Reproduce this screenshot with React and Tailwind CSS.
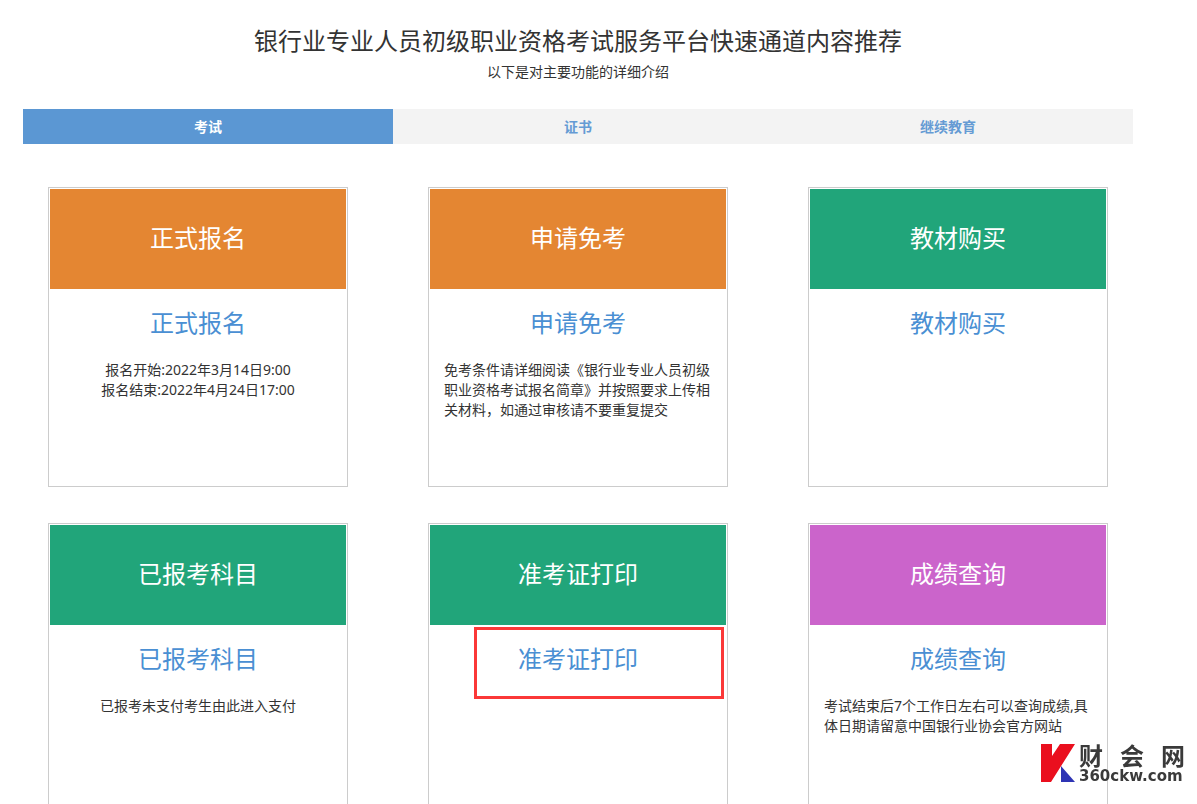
import { useState } from "react";
import clsx from "clsx";

const tabs = ["考试", "证书", "继续教育"];

const cards = [
  {
    title: "正式报名",
    color: "bg-[#e48632]",
    lines: ["报名开始:2022年3月14日9:00", "报名结束:2022年4月24日17:00"],
  },
  {
    title: "申请免考",
    color: "bg-[#e48632]",
    lines: ["免考条件请详细阅读《银行业专业人员初级职业资格考试报名简章》并按照要求上传相关材料，如通过审核请不要重复提交"],
    alignLeft: true,
  },
  { title: "教材购买", color: "bg-[#21a57a]", lines: [] },
  { title: "已报考科目", color: "bg-[#21a57a]", lines: ["已报考未支付考生由此进入支付"] },
  { title: "准考证打印", color: "bg-[#21a57a]", lines: [], highlighted: true },
  {
    title: "成绩查询",
    color: "bg-[#cb64cb]",
    lines: ["考试结束后7个工作日左右可以查询成绩,具体日期请留意中国银行业协会官方网站"],
    alignLeft: true,
  },
];

function Card({ title, color, lines, alignLeft, highlighted }) {
  return (
    <article className="relative min-h-[300px] border border-[#cccccc] p-px">
      <a href="#" className={clsx("flex h-[100px] items-center justify-center pb-0.5 text-2xl text-white", color)}>
        {title}
      </a>
      <h2 className="mt-4 text-center text-2xl leading-9 text-[#4a8fd3]">
        <a href="#">{title}</a>
      </h2>
      <div className={clsx("mt-[19px] px-3.5 leading-5", alignLeft ? "text-left" : "text-center")}>
        {lines.map((line) => (
          <p key={line}>{line}</p>
        ))}
      </div>
      {highlighted && (
        <div className="pointer-events-none absolute top-[103px] right-[3px] h-[72px] w-[250px] border-3 border-[#fb3838]" />
      )}
    </article>
  );
}

function SiteLogo() {
  return (
    <a href="#" className="fixed right-3 bottom-5 flex items-center gap-1 text-[#3a3a3a]">
      <svg width="35" height="40" viewBox="0 0 35 40" aria-hidden="true">
        <path d="M1 0H12V12L20 0H35L11 38H1Z" fill="#ea0f1e" />
        <path d="M21 22L35 38H21Z" fill="#2e34b4" />
      </svg>
      <span className="flex w-[106px] flex-col gap-px">
        <span className="flex justify-between font-['Noto_Sans_CJK_SC',sans-serif] text-2xl leading-6 font-bold">
          <span>财</span>
          <span>会</span>
          <span>网</span>
        </span>
        <span className="font-['DejaVu_Sans',sans-serif] text-[15px] leading-4 font-bold">360ckw.com</span>
      </span>
    </a>
  );
}

export default function App() {
  const [active, setActive] = useState("考试");

  return (
    <div className="bg-white pt-[23px] pr-16 pl-[23px] font-['Noto_Sans','Noto_Sans_CJK_SC',sans-serif] text-sm text-[#333333]">
      <header className="text-center">
        <h1 className="text-2xl leading-9">银行业专业人员初级职业资格考试服务平台快速通道内容推荐</h1>
        <p className="mt-[3px] leading-5">以下是对主要功能的详细介绍</p>
      </header>

      <nav className="mt-[27px] grid grid-cols-3 bg-[#f3f3f3]">
        {tabs.map((tab) => (
          <button
            key={tab}
            type="button"
            onClick={() => setActive(tab)}
            className={clsx(
              "h-[35px] cursor-pointer font-bold",
              active === tab ? "bg-[#5b97d3] text-white" : "text-[#659bd4]"
            )}
          >
            {tab}
          </button>
        ))}
      </nav>

      <main className="mt-[43px] grid grid-cols-3 gap-x-20 gap-y-9 px-[25px]">
        {cards.map((card) => (
          <Card key={card.title} {...card} />
        ))}
      </main>

      <SiteLogo />
    </div>
  );
}
